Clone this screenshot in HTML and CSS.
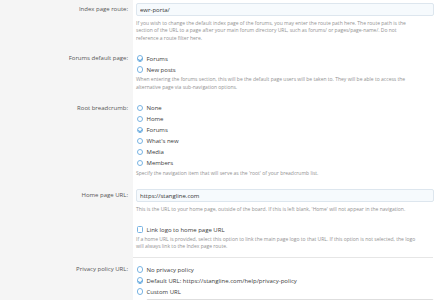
FILE: index.html
```html
<!DOCTYPE html>
<html lang="en">
<head>
  <meta charset="UTF-8" />
  <title>Options</title>
  <link rel="stylesheet" href="styles.css">
</head>
<body>
  <div class="options">

    <dl class="row row-first">
      <dt class="label label-input">Index page route:</dt>
      <dd class="field">
        <input class="input" type="text" value="ewr-porta/" />
        <div class="hint">If you wish to change the default index page of the forums, you may enter the route path here. The route path is the section of the URL to a page after your main forum directory URL, such as forums/ or pages/page-name/. Do not reference a route filter here.</div>
      </dd>
    </dl>

    <dl class="row row-forums">
      <dt class="label">Forums default page:</dt>
      <dd class="field">
        <ul class="choices">
          <li class="choice"><span class="radio checked"></span>Forums</li>
          <li class="choice"><span class="radio"></span>New posts</li>
        </ul>
        <div class="hint">When entering the forums section, this will be the default page users will be taken to. They will be able to access the alternative page via sub-navigation options.</div>
      </dd>
    </dl>

    <dl class="row row-crumb">
      <dt class="label">Root breadcrumb:</dt>
      <dd class="field">
        <ul class="choices">
          <li class="choice"><span class="radio"></span>None</li>
          <li class="choice"><span class="radio"></span>Home</li>
          <li class="choice"><span class="radio checked"></span>Forums</li>
          <li class="choice"><span class="radio"></span>What's new</li>
          <li class="choice"><span class="radio"></span>Media</li>
          <li class="choice"><span class="radio"></span>Members</li>
        </ul>
        <div class="hint">Specify the navigation item that will serve as the 'root' of your breadcrumb list.</div>
      </dd>
    </dl>

    <dl class="row row-home">
      <dt class="label label-input">Home page URL:</dt>
      <dd class="field">
        <input class="input" type="text" value="https://stangline.com" />
        <div class="hint">This is the URL to your home page, outside of the board. If this is left blank, 'Home' will not appear in the navigation.</div>
      </dd>
    </dl>

    <dl class="row row-logo">
      <dt class="label"></dt>
      <dd class="field field-rule">
        <ul class="choices">
          <li class="choice"><span class="checkbox"></span>Link logo to home page URL</li>
        </ul>
        <div class="hint">If a home URL is provided, select this option to link the main page logo to that URL. If this option is not selected, the logo will always link to the Index page route.</div>
      </dd>
    </dl>

    <dl class="row row-privacy">
      <dt class="label">Privacy policy URL:</dt>
      <dd class="field">
        <ul class="choices">
          <li class="choice"><span class="radio"></span>No privacy policy</li>
          <li class="choice"><span class="radio checked"></span>Default URL: https://stangline.com/help/privacy-policy</li>
          <li class="choice"><span class="radio"></span>Custom URL</li>
        </ul>
        <input class="input input-sub" type="text" disabled />
      </dd>
    </dl>

  </div>
</body>
</html>
```

FILE: styles.css
```css
/* Base */
* {
  margin: 0;
  padding: 0;
  box-sizing: border-box;
}
body {
  font-family: 'Open Sans', sans-serif;
  background: #fff;
  color: #222;
  overflow: hidden;
}
/* Two column option list, gray label column */
.options {
  background: linear-gradient(to right, #f5f5f5 133px, #fff 133px);
  min-height: 300px;
}
.row {
  display: grid;
  grid-template-columns: 133px 1fr;
}
.label {
  text-align: right;
  padding-right: 5px;
  font-size: 6px;
  line-height: 11px;
  color: #555;
}
.label-input {
  line-height: 13px;
}
.field {
  padding: 0 3px;
}
/* Inputs */
.input {
  display: block;
  width: 100%;
  height: 13px;
  padding: 0 3px;
  font-family: 'Open Sans', sans-serif;
  font-size: 6px;
  color: #333;
  background: #f6fafd;
  border: 1px solid #dde6ee;
  border-radius: 2px;
  outline: none;
}
.input-sub {
  margin: 1.5px 0 0 10px;
  width: calc(100% - 10px);
  background: #ececec;
  border-color: #dedede;
}
.hint {
  font-size: 5px;
  line-height: 7.5px;
  color: #929292;
  padding-right: 16px;
}
/* Radio / checkbox lists */
.choices {
  list-style: none;
}
.choice {
  display: flex;
  align-items: center;
  height: 11px;
  font-size: 6px;
  color: #3a3a3a;
}
.radio,
.checkbox {
  flex: none;
  width: 6.5px;
  height: 6.5px;
  margin: 0 3.5px 0 0.5px;
  border: 0.8px solid #79b4e3;
  border-radius: 50%;
  position: relative;
}
.checkbox {
  border-radius: 1.5px;
}
.radio.checked::after {
  content: '';
  position: absolute;
  left: 1.5px;
  top: 0.5px;
  width: 1.5px;
  height: 2.8px;
  border: solid #5ea6dd;
  border-width: 0 0.7px 0.7px 0;
  transform: rotate(45deg);
}
/* Row spacing */
.row-first {
  padding: 3px 0 5.5px;
}
.row-first .hint {
  margin-top: 3.5px;
}
.row-forums {
  padding: 5.5px 0 6px;
}
.row-crumb {
  padding: 5.5px 0 12px;
}
.row-forums .hint,
.row-crumb .hint {
  margin-top: 1px;
}
.row-home {
  padding: 0 0 11px;
}
.row-home .hint {
  margin-top: 3.5px;
}
.row-logo .hint {
  margin-top: 0.5px;
  padding-right: 12px;
}
.field-rule {
  padding-bottom: 6.5px;
  border-bottom: 1px solid #e6e6e6;
  margin-right: 4px;
}
.row-privacy {
  padding-top: 6px;
}
```
